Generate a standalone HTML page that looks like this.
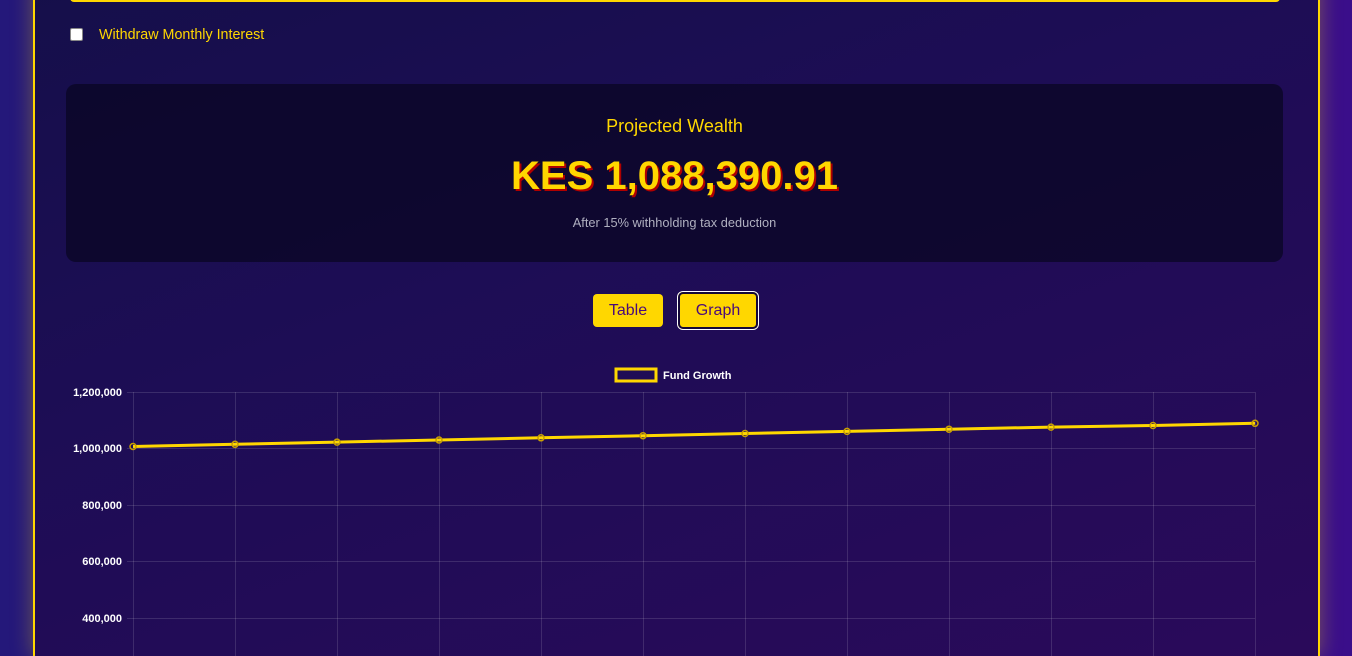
<!DOCTYPE html><html><head><style>
html,body{margin:0;width:1352px;height:656px;overflow:hidden}
body{background:linear-gradient(90deg,#24187a,#2a1680 50%,#3a0e8a);font-family:"Liberation Sans",sans-serif;position:relative}
.card{position:absolute;left:33px;top:-20px;width:1283px;height:674px;border:2px solid #ffd700;border-bottom:none;background:linear-gradient(160deg,#150f4a 0%,#1d0d55 40%,#2a0a5a 100%);box-shadow:0 0 20px rgba(255,215,0,.35)}
.topbar{position:absolute;left:70px;top:-2px;width:1210px;height:2px;border-bottom:2px solid #ffd700;border-radius:0 0 4px 4px}
.chk{position:absolute;left:70px;top:28px;width:11px;height:11px;background:#fff;border:1px solid #888;border-radius:2px}
.lbl{position:absolute;left:99px;top:27px;color:#ffd700;font-size:14.3px}
.res{position:absolute;left:66px;top:84px;width:1217px;height:178px;background:rgba(10,6,35,.75);border-radius:10px;text-align:center}
.res h3{margin:0;position:absolute;top:32px;width:100%;font-weight:normal;color:#ffd700;font-size:18px}
.res .v{position:absolute;top:70px;width:100%;color:#ffd700;font-size:40px;font-weight:bold;text-shadow:2px 2px 0 #b00000}
.res .s{position:absolute;top:131px;width:100%;color:#b0b0c0;font-size:12.8px}
.btn{position:absolute;top:294px;height:33px;background:#ffd700;color:#4a0a7a;font-size:16px;border-radius:4px;text-align:center;line-height:33px}
svg{position:absolute;left:0;top:0}
</style></head><body>
<div class="card"></div>
<div class="topbar"></div>
<div class="chk"></div><div class="lbl">Withdraw Monthly Interest</div>
<div class="res"><h3>Projected Wealth</h3><div class="v">KES 1,088,390.91</div><div class="s">After 15% withholding tax deduction</div></div>
<div class="btn" style="left:593px;width:70px">Table</div>
<div class="btn" style="left:678px;width:80px;top:292px;height:37px;line-height:37px;border-radius:5px;box-shadow:0 0 0 1px #fff,inset 0 0 0 2px #14083a">Graph</div>
<svg width="1352" height="656" font-family="Liberation Sans" font-size="11" font-weight="bold">
<rect x="616" y="369" width="40" height="12" fill="none" stroke="#ffd700" stroke-width="3"/>
<text x="663" y="379" fill="#fff">Fund Growth</text>
<g stroke="rgba(255,255,255,.13)" stroke-width="1">
<line x1="127" y1="392.5" x2="1255" y2="392.5"/><line x1="127" y1="448.5" x2="1255" y2="448.5"/><line x1="127" y1="505.5" x2="1255" y2="505.5"/><line x1="127" y1="561.5" x2="1255" y2="561.5"/><line x1="127" y1="618.5" x2="1255" y2="618.5"/>
<line x1="133.5" y1="392" x2="133.5" y2="656"/><line x1="235.5" y1="392" x2="235.5" y2="656"/><line x1="337.5" y1="392" x2="337.5" y2="656"/><line x1="439.5" y1="392" x2="439.5" y2="656"/><line x1="541.5" y1="392" x2="541.5" y2="656"/><line x1="643.5" y1="392" x2="643.5" y2="656"/><line x1="745.5" y1="392" x2="745.5" y2="656"/><line x1="847.5" y1="392" x2="847.5" y2="656"/><line x1="949.5" y1="392" x2="949.5" y2="656"/><line x1="1051.5" y1="392" x2="1051.5" y2="656"/><line x1="1153.5" y1="392" x2="1153.5" y2="656"/><line x1="1255.5" y1="392" x2="1255.5" y2="656"/>
</g>
<g fill="#fff" text-anchor="end"><text x="122" y="396">1,200,000</text><text x="122" y="452">1,000,000</text><text x="122" y="509">800,000</text><text x="122" y="565">600,000</text><text x="122" y="622">400,000</text></g>
<polyline fill="none" stroke="#ffd700" stroke-width="3" points="133,446.5 235,444.3 337,442.1 439,440 541,437.8 643,435.7 745,433.5 847,431.4 949,429.2 1051,427.1 1153,425.5 1255,423.3"/>
<g fill="none" stroke="#c9a000" stroke-width="1.5"><circle cx="133" cy="446.5" r="3"/><circle cx="235" cy="444.3" r="3"/><circle cx="337" cy="442.1" r="3"/><circle cx="439" cy="440" r="3"/><circle cx="541" cy="437.8" r="3"/><circle cx="643" cy="435.7" r="3"/><circle cx="745" cy="433.5" r="3"/><circle cx="847" cy="431.4" r="3"/><circle cx="949" cy="429.2" r="3"/><circle cx="1051" cy="427.1" r="3"/><circle cx="1153" cy="425.5" r="3"/><circle cx="1255" cy="423.3" r="3"/></g>
</svg>
</body></html>
